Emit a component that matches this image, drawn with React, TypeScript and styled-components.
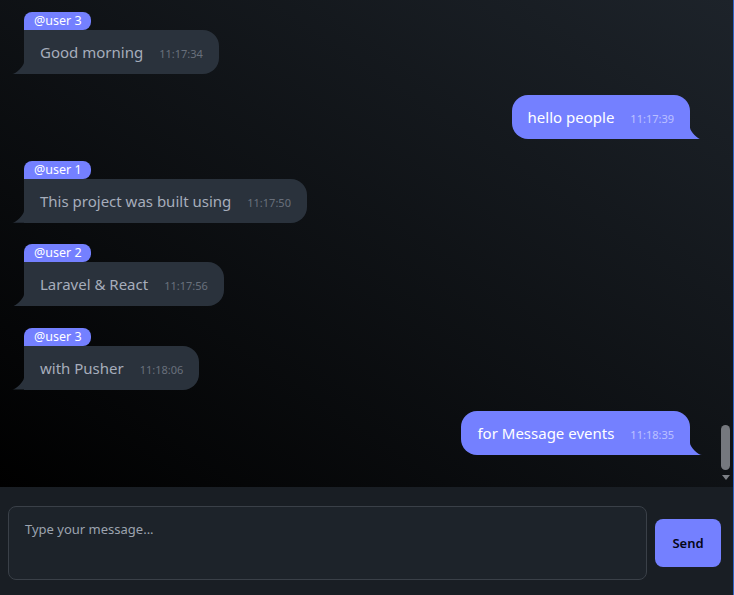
import React from "react";
import styled, { createGlobalStyle, css } from "styled-components";

const GlobalStyle = createGlobalStyle`
  html, body { margin: 0; padding: 0; }
  body {
    background: #191e24;
    font-family: "Noto Sans", "Open Sans", Roboto, sans-serif;
  }
  * { box-sizing: border-box; }
`;

const Shell = styled.div`
  display: flex;
  flex-direction: column;
  height: 100vh;
  width: 100%;
  border-right: 1px solid #3164c4;
  background: #191e24;
`;

const MessagePane = styled.div`
  position: relative;
  flex: 1;
  min-height: 0;
  overflow: hidden;
  background: linear-gradient(to top right, #000000, #1d232a);
`;

const MessageList = styled.div`
  height: 100%;
  display: flex;
  flex-direction: column;
  justify-content: flex-end;
  gap: 21.4px;
  padding: 0 31px 32px 12px;
`;

const ScrollTrack = styled.div`
  position: absolute;
  top: 0;
  right: 0;
  bottom: 0;
  width: 15px;
  display: flex;
  flex-direction: column;
  align-items: center;
  justify-content: flex-end;
  gap: 5px;
  padding-bottom: 7px;
`;

const ScrollThumb = styled.div`
  width: 9px;
  height: 45px;
  border-radius: 5px;
  background: #75787e;
`;

const ScrollArrow = styled.svg`
  display: block;
  width: 8px;
  height: 5px;
`;

const Row = styled.div<{ $mine?: boolean }>`
  display: flex;
  flex-direction: column;
  align-items: ${(p) => (p.$mine ? "flex-end" : "flex-start")};
  padding: ${(p) => (p.$mine ? "0 12px 0 0" : "0 0 0 12px")};
`;

const SenderTag = styled.div`
  height: 18px;
  line-height: 18px;
  padding: 0 9px 0 10px;
  font-size: 12.5px;
  color: #ffffff;
  background: #7480ff;
  border-radius: 8px 8px 8px 0;
`;

const Bubble = styled.div<{ $mine?: boolean }>`
  position: relative;
  min-height: 44px;
  padding: 10px 16px;
  font-size: 15px;
  line-height: 24px;
  white-space: nowrap;
  ${(p) =>
    p.$mine
      ? css`
          background: #7480ff;
          color: #ffffff;
          border-radius: 16px 16px 0 16px;
          &::before {
            content: "";
            position: absolute;
            bottom: 0;
            right: -12px;
            width: 12px;
            height: 12px;
            background: #7480ff;
            clip-path: path("M0 0 L0 12 L12 12 C8 12 0 4 0 0 Z");
          }
        `
      : css`
          background: #2a323c;
          color: #a6adbb;
          border-radius: 0 16px 16px 0;
          &::before {
            content: "";
            position: absolute;
            bottom: 0;
            left: -12px;
            width: 12px;
            height: 12px;
            background: #2a323c;
            clip-path: path("M0 12 L12 12 L12 0 C12 4 4 12 0 12 Z");
          }
        `}
`;

const Stamp = styled.span`
  margin-left: 16px;
  font-size: 11px;
  line-height: 1;
  opacity: 0.5;
`;

const Composer = styled.div`
  display: flex;
  align-items: center;
  gap: 8px;
  padding: 19px 12px 15px 8px;
  background: #191e24;
`;

const MessageInput = styled.textarea`
  flex: 1;
  height: 74px;
  resize: none;
  padding: 12px 16px;
  font-family: inherit;
  font-size: 13px;
  line-height: 20px;
  color: #a6adbb;
  background: #1d232a;
  border: 1px solid #3a4048;
  border-radius: 8px;
  outline: none;
  &::placeholder { color: #9ca3af; opacity: 1; }
`;

const SendButton = styled.button`
  width: 66px;
  height: 48px;
  border: none;
  border-radius: 8px;
  background: #7480ff;
  color: #050617;
  font-family: inherit;
  font-size: 13px;
  font-weight: 600;
  cursor: pointer;
`;

type Msg = { user?: string; text: string; time: string; mine?: boolean };

const messages: Msg[] = [
  { user: "@user 3", text: "Good morning", time: "11:17:34" },
  { text: "hello people", time: "11:17:39", mine: true },
  { user: "@user 1", text: "This project was built using", time: "11:17:50" },
  { user: "@user 2", text: "Laravel & React", time: "11:17:56" },
  { user: "@user 3", text: "with Pusher", time: "11:18:06" },
  { text: "for Message events", time: "11:18:35", mine: true },
];

export default function App() {
  return (
    <>
      <GlobalStyle />
      <Shell>
        <MessagePane>
          <MessageList>
            {messages.map((m, i) => (
              <Row key={i} $mine={m.mine}>
                {m.user && <SenderTag>{m.user}</SenderTag>}
                <Bubble $mine={m.mine}>
                  {m.text}
                  <Stamp>{m.time}</Stamp>
                </Bubble>
              </Row>
            ))}
          </MessageList>
          <ScrollTrack aria-hidden>
            <ScrollThumb />
            <ScrollArrow viewBox="0 0 8 5">
              <path d="M0 0h8L4 5z" fill="#7d8086" />
            </ScrollArrow>
          </ScrollTrack>
        </MessagePane>
        <Composer>
          <MessageInput placeholder="Type your message..." />
          <SendButton>Send</SendButton>
        </Composer>
      </Shell>
    </>
  );
}
